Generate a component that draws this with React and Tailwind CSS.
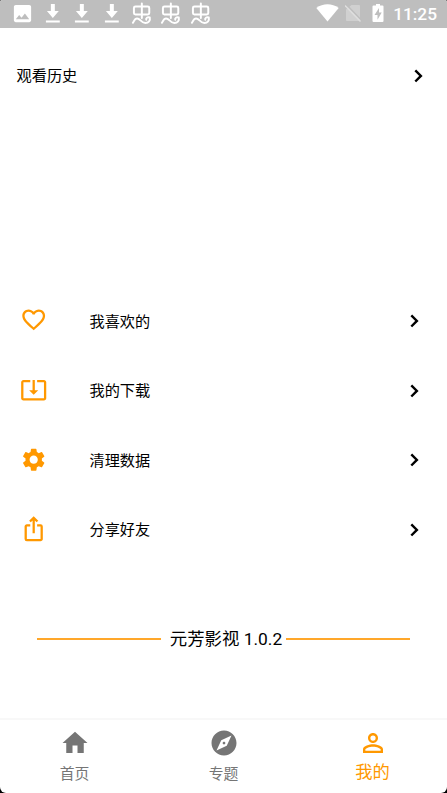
import React, { useState } from "react";
import {
  MdExplore,
  MdFavoriteBorder,
  MdHome,
  MdImage,
  MdIosShare,
  MdPersonOutline,
  MdSettings,
  MdSystemUpdateAlt,
} from "react-icons/md";

const menuItems = [
  { label: "我喜欢的", icon: MdFavoriteBorder },
  { label: "我的下载", icon: MdSystemUpdateAlt },
  { label: "清理数据", icon: MdSettings },
  { label: "分享好友", icon: MdIosShare },
];

const tabs = [
  { label: "首页", icon: MdHome },
  { label: "专题", icon: MdExplore },
  { label: "我的", icon: MdPersonOutline },
];

const Chevron = () => (
  <svg className="w-3 h-4" viewBox="0 0 12 16" fill="none" stroke="black">
    <path strokeWidth="2.4" d="M2.300 2.300l5.600 5.600-5.600 5.600" />
  </svg>
);

const DownloadIcon = () => (
  <svg className="w-[29.700px] h-7" viewBox="0 0 30 28" fill="white">
    <path d="M13 4h4v7h4l-6 7-6-7h4zM8 20.5h14v2H8z" />
  </svg>
);

const BugIcon = () => (
  <svg
    className="w-[29.700px] h-7"
    viewBox="0 0 30 28"
    fill="none"
    stroke="white"
    strokeWidth="2"
    strokeLinecap="round"
    strokeLinejoin="round"
  >
    <path d="M8.500 6.500h12.500q1.500 0 1.500 1.500v5q0 1.500-1.500 1.500h-12.500q-1.500 0-1.500-1.500V8q0-1.500 1.500-1.500zM15 3.500V18" />
    <path d="M6 22.800c1-1 1.500-4.300 4.200-4.300 3.300 0 3.800 4.500 8.300 4.500 3.500 0 5.200-2.500 4.500-5.500-2.300-.7-4.200.6-3.500 2.300" />
  </svg>
);

// Status bar
const StatusBar = () => (
  <div className="flex items-center h-7 bg-[#bebebe] text-white">
    <div className="flex items-center pl-[11px]">
      <MdImage className="w-[23px] h-[23px] mr-[3.500px] -mt-[2px]" />
      <DownloadIcon />
      <DownloadIcon />
      <DownloadIcon />
      <BugIcon />
      <BugIcon />
      <BugIcon />
    </div>
    <div className="flex items-center ml-auto pr-[10px]">
      <svg className="w-6 h-7" viewBox="0 0 24 28" fill="white">
        <path d="M.3 8C7 3 16 3 22.700 8L11.500 21.500z" />
      </svg>
      <svg className="w-[18px] h-7 ml-[5px]" viewBox="0 0 18 28">
        <path fill="#d0d0d0" d="M6.500 5H14q1 0 1 1v14q0 1-1 1H2q-1 0-1-1V9.500z" />
        <path stroke="#bebebe" strokeWidth="1.500" d="M1.500 4.800l15 15.500" />
        <path stroke="#dedede" strokeWidth="1.500" d="M0 5.500l15.500 16" />
      </svg>
      <svg className="w-3 h-7 ml-[9px]" viewBox="0 0 12 28">
        <path fill="white" d="M4 4h4v1.500h2.500q1 0 1 1V21q0 1-1 1h-9q-1 0-1-1V6.500q0-1 1-1H4z" />
        <path fill="#bebebe" d="M7 8l-4.500 7H5.500V19.800L9.700 12.500H7z" />
      </svg>
      <span className="ml-[9px] text-[17.300px] leading-[27px] font-medium">11:25</span>
    </div>
  </div>
);

const App = () => {
  const [active, setActive] = useState("我的");

  return (
    <div className="h-[793px] bg-black">
      <div className="flex flex-col h-full overflow-hidden rounded-t-[2px] rounded-b-[6px] bg-white text-black font-['Roboto','Noto_Sans_CJK_SC',sans-serif]">
        <StatusBar />

        {/* Watch history */}
        <button className="flex items-center justify-between h-24 pl-[16.500px] pr-[22.500px]">
          <span className="text-[15.200px]">观看历史</span>
          <Chevron />
        </button>

        {/* Menu */}
        <div className="mt-[162.300px]">
          {menuItems.map(({ label, icon: Icon }) => (
            <button key={label} className="flex items-center w-full h-[69.600px] pl-[20.400px] pr-[26px]">
              <Icon className="w-[27.400px] h-[27.400px] -mt-[2px] text-[#ff9800]" />
              <span className="ml-[41.700px] mr-auto pt-[2px] text-[15.200px]">{label}</span>
              <Chevron />
            </button>
          ))}
        </div>

        {/* Version */}
        <div className="flex items-center justify-center mt-[59.700px] h-[30px]">
          <div className="w-[124px] h-[2px] bg-[#ffa72a]"></div>
          <span className="ml-[9px] mr-[4px] text-[17.400px] whitespace-nowrap">元芳影视 1.0.2</span>
          <div className="w-[124px] h-[2px] bg-[#ffa72a]"></div>
        </div>

        {/* Bottom tabs */}
        <nav className="flex mt-auto h-[75px] border-t-2 border-[#f8f8f8]">
          {tabs.map(({ label, icon: Icon }) => (
            <button
              key={label}
              onClick={() => setActive(label)}
              className={`flex flex-1 flex-col items-center pt-2 ${
                active === label ? "text-[#ff9800]" : "text-[#757575]"
              }`}
            >
              <Icon className="w-[30px] h-[30px]" />
              <span
                className={`leading-[26px] ${
                  active === label ? "text-[17.300px] pt-px" : "text-[14.800px] pt-[3px]"
                }`}
              >
                {label}
              </span>
            </button>
          ))}
        </nav>
      </div>
    </div>
  );
};

export default App;
